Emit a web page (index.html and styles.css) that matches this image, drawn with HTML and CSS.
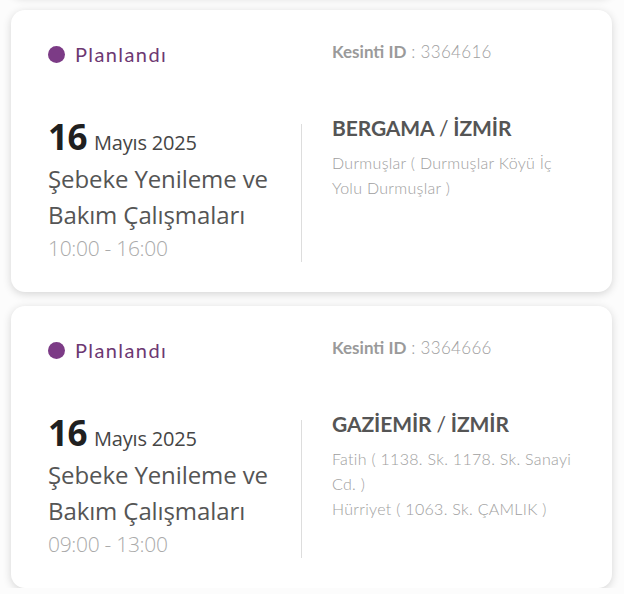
FILE: index.html
```html
<!DOCTYPE html>
<html lang="tr">
<head>
<meta charset="utf-8">
<link rel="stylesheet" href="styles.css">
</head>
<body>
<div class="list">
  <div class="card stub"></div>

  <div class="card">
    <div class="status"><span class="dot"></span><span class="status-text">Planlandı</span></div>
    <div class="outage-id"><b>Kesinti ID</b> : 3364616</div>
    <div class="when">
      <div class="date"><span class="day">16</span><span class="month">Mayıs 2025</span></div>
      <div class="title">Şebeke Yenileme ve Bakım Çalışmaları</div>
      <div class="time">10:00 - 16:00</div>
    </div>
    <div class="where">
      <div class="city">BERGAMA <span class="slash">/</span> İZMİR</div>
      <div class="addr">Durmuşlar ( Durmuşlar Köyü İç Yolu Durmuşlar )</div>
    </div>
  </div>

  <div class="card">
    <div class="status"><span class="dot"></span><span class="status-text">Planlandı</span></div>
    <div class="outage-id"><b>Kesinti ID</b> : 3364666</div>
    <div class="when">
      <div class="date"><span class="day">16</span><span class="month">Mayıs 2025</span></div>
      <div class="title">Şebeke Yenileme ve Bakım Çalışmaları</div>
      <div class="time">09:00 - 13:00</div>
    </div>
    <div class="where">
      <div class="city">GAZİEMİR <span class="slash">/</span> İZMİR</div>
      <div class="addr">Fatih ( 1138. Sk. 1178. Sk. Sanayi Cd. )</div>
      <div class="addr">Hürriyet ( 1063. Sk. ÇAMLIK )</div>
    </div>
  </div>
</div>
</body>
</html>
```

FILE: styles.css
```css
* { box-sizing: border-box; }
html, body { margin: 0; padding: 0; background: #fcfcfc; overflow: hidden; }
body { font-family: "Lato", "Noto Sans", sans-serif; }

.list {
  display: flex;
  flex-direction: column;
  gap: 14px;
  padding: 0 12px 0 11px;
}

.card {
  background: #fff;
  border-radius: 14px;
  box-shadow: 0 2px 8px rgba(0, 0, 0, 0.16);
  display: grid;
  grid-template-columns: 254px 1fr;
  grid-template-rows: 30px 1fr;
  padding: 28px 36px 30px 36px;
  height: 282px;
}
.card.stub { height: 20px; margin-top: -24px; padding: 0; }

.status { display: flex; align-items: center; gap: 10px; height: 30px; margin-top: 1px; }
.dot { width: 17px; height: 17px; border-radius: 50%; background: #7c3b86; margin-left: 1px; }
.status-text { font-size: 20px; color: #6d3872; letter-spacing: 1.4px; }

.outage-id {
  padding-left: 31px;
  font-size: 17px;
  color: #a0a0a0;
  height: 30px;
  line-height: 28px;
  font-weight: 300;
  letter-spacing: 0.3px;
}
.outage-id b { font-weight: 700; color: #9a9a9a; letter-spacing: 0; }

.when {
  font-family: "Open Sans", "Noto Sans", sans-serif;
  padding-top: 51px;
  padding-left: 1px;
}
.date { font-size: 35px; line-height: 36px; height: 36px; }
.day { font-size: 35px; font-weight: 700; color: #202020; letter-spacing: -0.5px; margin-right: 7px; }
.month { font-size: 20px; color: #454545; letter-spacing: -0.2px; }
.title { font-size: 24px; line-height: 36px; color: #555; letter-spacing: -0.1px; margin-top: 6px; }
.time { font-size: 21px; line-height: 28px; color: #aaa; font-weight: 300; letter-spacing: -0.3px; margin-top: 1px; }

.where {
  margin-top: 56px;
  border-left: 1px solid #ddd;
  padding-left: 30px;
}
.city { font-size: 21px; font-weight: 700; color: #555; line-height: 24px; margin-top: -8px; letter-spacing: -0.1px; }
.slash { font-weight: 400; }
.addr { font-size: 16px; line-height: 25px; color: #9e9e9e; font-weight: 300; letter-spacing: 0.3px; }
.city + .addr { margin-top: 10px; }
```
